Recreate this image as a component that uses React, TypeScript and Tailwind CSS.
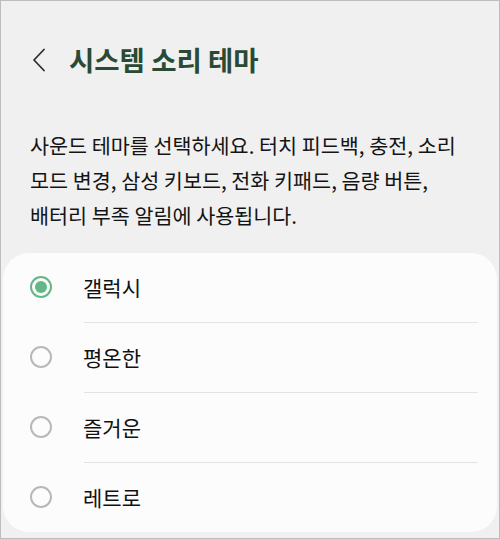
import React from "react";

const font = { fontFamily: '"Noto Sans CJK KR", "Noto Sans", sans-serif' };

function Radio({ checked }: { checked: boolean }) {
  if (checked) {
    return (
      <div className="flex h-[22px] w-[22px] items-center justify-center rounded-full border-[2.5px] border-[#63b787]">
        <div className="h-[12px] w-[12px] rounded-full bg-[#63b787]" />
      </div>
    );
  }
  return <div className="h-[22px] w-[22px] rounded-full border-[2px] border-[#b8b8b8]" />;
}

const items = ["갤럭시", "평온한", "즐거운", "레트로"];

export default function App() {
  return (
    <div
      className="flex h-[539px] w-[500px] flex-col overflow-hidden border border-[#bdbdbd] bg-[#f0f0f0]"
      style={font}
    >
      <div className="flex h-[117px] shrink-0 items-center">
        <div className="ml-[31px] flex h-[24px] w-[16px] items-center">
          <svg width="14" height="24" viewBox="0 0 14 24" fill="none">
            <path d="M12 1.5 L2 12 L12 22.5" stroke="#2e2e2e" strokeWidth="1.8" strokeLinecap="round" strokeLinejoin="round" />
          </svg>
        </div>
        <div className="ml-[21px] text-[27.5px] font-bold leading-none text-[#2a4a36]">시스템 소리 테마</div>
      </div>
      <div className="flex flex-col whitespace-nowrap pl-[29px] pt-[10px] text-[20.7px] leading-[35px] text-[#141414]">
        <span>사운드 테마를 선택하세요. 터치 피드백, 충전, 소리</span>
        <span>모드 변경, 삼성 키보드, 전화 키패드, 음량 버튼,</span>
        <span>배터리 부족 알림에 사용됩니다.</span>
      </div>
      <div className="mx-[2px] mt-[20px] flex flex-col rounded-[26px] bg-[#fcfcfc]">
        {items.map((label, i) => (
          <div key={label} className="flex flex-col">
            {i > 0 && <div className="ml-[81px] mr-[19px] h-[1.5px] bg-[#e3e3e3]" />}
            <div className="flex h-[68.5px] items-center">
              <div className="ml-[27px] flex w-[22px] justify-center">
                <Radio checked={i === 0} />
              </div>
              <span className="ml-[31px] text-[21px] leading-none text-[#111111]">{label}</span>
            </div>
          </div>
        ))}
      </div>
    </div>
  );
}
